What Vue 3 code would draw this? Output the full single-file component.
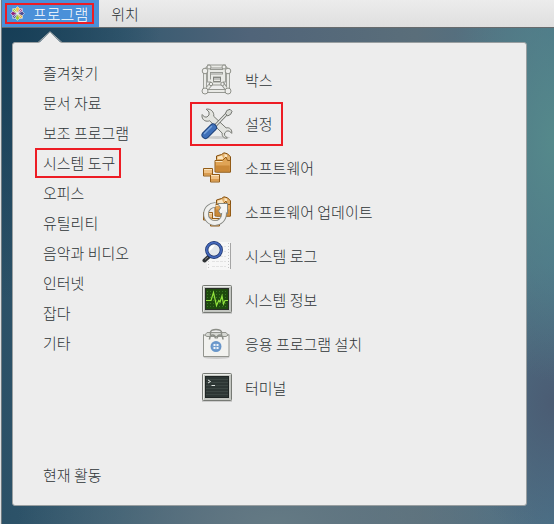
<template>
	<div class="desktop">
		<nav class="panel" aria-label="패널">
			<button class="panel-btn active" type="button" @click="open = !open">
				<span class="mark">
					<svg class="logo" viewBox="0 0 16 16" aria-hidden="true">
						<g stroke="#dfe9f3" stroke-width=".7">
							<path fill="#9ccd2a" d="M2.8 2.8h5v5h-5z" />
							<path fill="#a8408f" d="M8.2 2.8h5v5h-5z" />
							<path fill="#efa724" d="M8.2 8.2h5v5h-5z" />
							<path fill="#4b4a91" d="M2.8 8.2h5v5h-5z" />
							<path fill="#efc14a" d="m8 .6 2.4 2.5L8 7.2 5.6 3.1z" />
							<path fill="#4b4a91" d="m15.4 8-2.5 2.4L8.8 8l4.1-2.4z" />
							<path fill="#9ccd2a" d="m8 15.4-2.4-2.5L8 8.8l2.4 4.1z" />
							<path fill="#932279" d="m.6 8 2.5-2.4L7.2 8l-4.1 2.4z" />
						</g>
						<path fill="none" stroke="#eef3f8" stroke-width=".8" d="m3.5 3.5 9 9M12.5 3.5l-9 9" />
					</svg>
					<span>프로그램</span>
				</span>
			</button>
			<button class="panel-btn" type="button">위치</button>
		</nav>

		<div v-if="open" class="popup">
			<svg class="arrow" viewBox="0 0 26 13" aria-hidden="true">
				<path fill="#ededed" d="M1 13 13 1l12 12z" />
				<path fill="none" stroke="#a9adae" d="M1 11.5 13 .7l12 10.8" />
			</svg>
			<div class="columns">
				<ul class="categories">
					<li v-for="name in categories" :key="name">
						<button class="category" :class="{ marked: name === current }" type="button" @click="current = name">{{ name }}</button>
					</li>
				</ul>
				<ul class="apps">
					<li v-for="app in apps" :key="app.name">
						<button class="app" :class="{ marked: app.marked }" type="button">
							<svg class="icon" viewBox="0 0 32 32" aria-hidden="true">
								<!-- boxes -->
								<g v-if="app.icon === 'boxes'" fill="none">
									<path stroke="#969892" stroke-width="3.8" d="M4 7h23v20H4zM8 2.5h15v14H8zM4 7l4-4.5M27 7l-4-4.5M4 27l7-8M27 27l-6-8M11 11.5h10v8H11z" />
									<path stroke="#e9eae6" stroke-width="2" d="M4 7h23v20H4zM8 2.5h15v14H8zM4 7l4-4.5M27 7l-4-4.5M4 27l7-8M27 27l-6-8M11 11.5h10v8H11z" />
									<path stroke="#777973" stroke-width=".8" d="M12.5 13.5h7v4h-7z" />
									<g fill="#eeeeec" stroke="#85877f" stroke-width=".9">
										<circle cx="8" cy="3" r="2" />
										<circle cx="23" cy="3" r="2" />
										<circle cx="4" cy="7" r="2.8" />
										<circle cx="27" cy="7" r="2.8" />
										<circle cx="4" cy="27" r="3" />
										<circle cx="27" cy="27" r="3" />
										<circle cx="10" cy="20" r="1.7" />
										<circle cx="21.5" cy="20" r="1.7" />
									</g>
								</g>
								<!-- settings -->
								<g v-else-if="app.icon === 'settings'">
									<ellipse cx="16" cy="29.5" rx="13" ry="1.5" fill="#ccc" />
									<path fill="#e3e4e0" stroke="#777973" d="M5.2 1.2 8 4v3L6 9H3.5L1.2 6.5c-1 3.4 1.4 6.7 5 6.7 1 0 1.8-.1 2.4-.4l12.6 12.3c-.5 3.3 1.9 5.7 5.2 5l-2.8-2.8V25l2.2-2h2.5l2.4 2.4c.8-3.6-2.3-6.4-5.6-5.5L12.7 8.3C13.5 4 9.5.2 5.2 1.2z" />
									<path stroke="#666964" stroke-width="3" d="m14 18 12-12.5" />
									<path stroke="#e7e8e5" stroke-width="1.4" d="m14 18 12-12.5" />
									<path fill="#d8dad5" stroke="#666964" stroke-width=".9" d="m24.5 5.5 1.3-3L29 1.3l2 2-1.3 3L26.6 8z" />
									<path stroke="#20437b" stroke-width="8" stroke-linecap="round" d="m4.5 27 7.5-7.5" />
									<path stroke="#3f70b9" stroke-width="6" stroke-linecap="round" d="m4.5 27 7.5-7.5" />
									<path stroke="#79a3dc" stroke-width="1.4" stroke-linecap="round" d="m3.5 25.5 7-7" />
								</g>
								<!-- software, and the same boxes under the update arrow -->
								<g v-else-if="app.icon === 'software' || app.icon === 'update'">
									<path fill="#e3b06a" stroke="#85500f" d="M15.5 7.5V4l5-1.5L23 .8l3.5 1 3 3V20h-14z" />
									<path fill="#fbe6c2" d="M16.5 7V4.8l4.5-1.2L22.5 7zM23.5 6V2l2.5.8V6z" />
									<path fill="#e0a456" stroke="#945c17" d="M14 8.5h7.5L25 5l1.5 3.5h3v11.5H14z" />
									<path fill="#cb8938" d="M15 13.5h13.7v5.8H15z" />
									<g stroke="#945c17">
										<path fill="#efc184" d="M2.5 16.5h9v7.5h-9z" />
										<path fill="#efc184" d="M9.5 22.5h9V30h-9z" />
									</g>
									<path stroke="#fae4bf" d="M3 17.5h8M10 23.5h8M14.5 9.5h7" />
									<path stroke="#d99c50" stroke-width="2" d="M3 22h8M10 28h8" />
									<g v-if="app.icon === 'update'">
										<path fill="none" stroke="#858883" stroke-width="5.6" d="M14.5 9A9 9 0 1 0 23 18.2V14" />
										<path fill="#f5f5f4" stroke="#858883" d="M16.5 7.5h10v10.5l-3.2-3.2-3.5 3.5-2.2-3.2 2-3.5z" />
										<path fill="none" stroke="#f0f0ee" stroke-width="3.8" d="M14.5 9A9 9 0 1 0 23 18.2V14" />
									</g>
								</g>
								<!-- log viewer -->
								<g v-else-if="app.icon === 'log'">
									<path fill="#f7f7f7" d="M6 2h23v28H6z" />
									<path stroke="#a5a5a5" d="M29.5 3v26" />
									<path stroke="#c6c6c6" stroke-dasharray="1 2" d="M7.5 3v27M27.5 3v27" />
									<path stroke="#e2e2e2" stroke-dasharray="3 1" d="M11 6.5h14M11 11.5h14M11 16.5h14M11 21.5h14M11 26.5h14" />
									<path stroke="#2e3234" stroke-width="4" stroke-linecap="round" d="m3.5 20.5 4.5-4" />
									<path stroke="#888" d="m4 19.5 3-2.5" />
									<circle cx="13" cy="10" r="7.3" fill="#e4e8ec" stroke="#17306b" stroke-width="3.2" />
									<circle cx="13" cy="10" r="7.3" fill="none" stroke="#4569bb" stroke-width="1.8" />
									<path fill="#fff" d="M8 11c0-4 3-6 6-6-2 2-3 5-6 6z" />
								</g>
								<!-- system monitor -->
								<g v-else-if="app.icon === 'monitor'">
									<rect x="1" y="28" width="30" height="2" fill="#ccc" />
									<rect x="1.5" y="1.5" width="29" height="27" rx="1" fill="#c3c6c1" stroke="#777a75" />
									<path fill="none" stroke="#eceeea" d="M2.5 27.5v-25h27" />
									<rect x="4.5" y="4.5" width="23" height="21" fill="#1e4a0e" stroke="#282c27" />
									<path stroke="#387722" stroke-dasharray="1 2" d="M6 7.5h21M6 10.5h21M6 13.5h21M6 16.5h21M6 19.5h21M6 22.5h21" />
									<path fill="none" stroke="#92e23d" stroke-width="1.2" d="M5 16.5h5l2.5-8 3 13 2.2-5 1.3 1.5 2-6 1.5 8 1.5-3.5h3" />
								</g>
								<!-- software installer -->
								<g v-else-if="app.icon === 'install'">
									<ellipse cx="15.5" cy="29.5" rx="13" ry="1.5" fill="#ccc" />
									<path fill="#d6d8d3" stroke="#92948e" d="M3.5 7.5 6 4.5h19l2.5 3V10h-24z" />
									<path fill="none" stroke="#8b8e87" stroke-width="1.4" d="M9.5 7V4c1-3.3 10-3.3 11 0v3" />
									<path fill="#f2f2ef" stroke="#92948e" d="M2.5 6.5 6 8.5h19l3-2v22h-25.5z" />
									<path fill="none" stroke="#8b8e87" stroke-width="1.6" d="M8.5 11.5C9 5.5 14 6 14.5 10.5M16 10.5C16.5 6 21.5 5.5 22 11.5" />
									<circle cx="15" cy="18.5" r="5.5" fill="#729fcf" />
									<circle cx="15" cy="18.5" r="4.5" fill="none" stroke="#6592c8" />
									<path fill="#eef3f9" d="M12.5 16h2v2h-2zM15.5 16h2v2h-2zM12.5 19h2v2h-2zM15.5 19h2v2h-2z" />
								</g>
								<!-- terminal -->
								<g v-else>
									<rect x="1" y="28" width="30" height="2" fill="#ccc" />
									<rect x="1.5" y="1.5" width="29" height="27" rx="1" fill="#c3c6c1" stroke="#777a75" />
									<path fill="none" stroke="#eceeea" d="M2.5 27.5v-25h27" />
									<rect x="4.5" y="4.5" width="23" height="21" fill="#2d3634" stroke="#1f2524" />
									<path stroke="#3c4643" d="M5 7.5h22M5 10.5h22M5 13.5h22M5 16.5h22M5 19.5h22M5 22.5h22" />
									<path fill="none" stroke="#e0e5e2" d="m7 8 2.5 1.5L7 11M10.5 13.5H14" />
								</g>
							</svg>
							<span>{{ app.name }}</span>
						</button>
					</li>
				</ul>
			</div>
			<button class="category overview" type="button">현재 활동</button>
		</div>
	</div>
</template>

<script setup>
import { ref } from "vue";

const open = ref(true);
const current = ref("시스템 도구");

const categories = ["즐겨찾기", "문서 자료", "보조 프로그램", "시스템 도구", "오피스", "유틸리티", "음악과 비디오", "인터넷", "잡다", "기타"];

const apps = [
	{ name: "박스", icon: "boxes" },
	{ name: "설정", icon: "settings", marked: true },
	{ name: "소프트웨어", icon: "software" },
	{ name: "소프트웨어 업데이트", icon: "update" },
	{ name: "시스템 로그", icon: "log" },
	{ name: "시스템 정보", icon: "monitor" },
	{ name: "응용 프로그램 설치", icon: "install" },
	{ name: "터미널", icon: "terminal" },
];
</script>

<style>
body {
	margin: 0;
}
</style>

<style scoped>
.desktop {
	box-sizing: border-box;
	min-height: 100vh;
	padding-left: 1px;
	border-left: 1px solid #dfe1e2;
	box-shadow: inset 1px 0 #6f7a80;
	background:
		radial-gradient(ellipse 110px 240px at 100% 27%, #55898b, transparent),
		radial-gradient(ellipse 100px 140px at 100% 77%, #4b5c73, transparent),
		radial-gradient(ellipse 260px 120px at 50% 100%, #647a84, transparent),
		radial-gradient(ellipse 160px 300px at 0% 0%, #143c55, transparent),
		linear-gradient(to right, #2b5167, #365a70 22%, #506479 45%, #5a6e7a 75%, #4b7188);
	font-family: "Noto Sans CJK KR", sans-serif;
	font-size: 15px;
	line-height: 22px;
	color: #2e3436;
}

button {
	box-sizing: border-box;
	margin: 0;
	padding: 0;
	border: 2px solid transparent;
	background: none;
	color: inherit;
	font: inherit;
	font-weight: 300;
	text-align: left;
	white-space: nowrap;
}

ul {
	margin: 0;
	padding: 0;
	list-style: none;
}

.panel {
	display: flex;
	height: 27px;
	border-bottom: 1px solid #676b6d;
	background: linear-gradient(#ececec, #dfdfdf);
}

.panel-btn {
	padding: 0 12px;
	border: 0;
}

.panel-btn.active {
	padding: 0 5px 0 3px;
	background: #4a90d9;
	color: #fff;
}

.mark {
	display: flex;
	align-items: center;
	gap: 8px;
	box-sizing: border-box;
	height: 21px;
	padding: 0 4px 0 3px;
	border: 2px solid #ed1c24;
}

.logo {
	width: 15px;
	height: 15px;
}

.popup {
	position: relative;
	margin: 14px 27px 18px 10px;
	padding: 15px 22px;
	border: 1px solid #999fa1;
	border-radius: 3px;
	background: #ededed;
}

.arrow {
	position: absolute;
	top: -12px;
	left: 24px;
	width: 26px;
	height: 13px;
}

.columns {
	display: grid;
	grid-template-columns: 155px 1fr;
}

.category {
	display: block;
	height: 30px;
	padding: 0 4px 0 6px;
}

.app {
	display: flex;
	align-items: center;
	gap: 12px;
	height: 44px;
	padding: 0 8px 0 9px;
}

.marked {
	border-color: #ed1c24;
}

.icon {
	flex: none;
	width: 32px;
	height: 32px;
}

.overview {
	margin-top: 50px;
}
</style>
